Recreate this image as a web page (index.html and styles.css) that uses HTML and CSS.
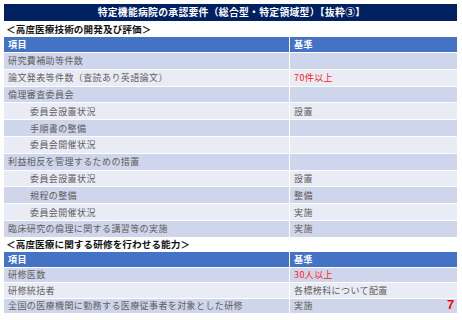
FILE: index.html
```html
<!DOCTYPE html>
<html lang="ja">
<head>
<meta charset="utf-8">
<link rel="stylesheet" href="styles.css">
</head>
<body>
<div class="slide">
  <div class="title">特定機能病院の承認要件（総合型・特定領域型）【抜粋③】</div>
  <div class="heading">＜高度医療技術の開発及び評価＞</div>
  <div class="table t1">
    <div class="row head"><div class="c1">項目</div><div class="c2">基準</div></div>
    <div class="row dark"><div class="c1">研究費補助等件数</div><div class="c2"></div></div>
    <div class="row light"><div class="c1">論文発表等件数（査読あり英語論文）</div><div class="c2 red">70件以上</div></div>
    <div class="row dark"><div class="c1">倫理審査委員会</div><div class="c2"></div></div>
    <div class="row light"><div class="c1 sub">委員会設置状況</div><div class="c2">設置</div></div>
    <div class="row dark"><div class="c1 sub">手順書の整備</div><div class="c2"></div></div>
    <div class="row light"><div class="c1 sub">委員会開催状況</div><div class="c2"></div></div>
    <div class="row dark"><div class="c1">利益相反を管理するための措置</div><div class="c2"></div></div>
    <div class="row light"><div class="c1 sub">委員会設置状況</div><div class="c2">設置</div></div>
    <div class="row dark"><div class="c1 sub">規程の整備</div><div class="c2">整備</div></div>
    <div class="row light"><div class="c1 sub">委員会開催状況</div><div class="c2">実施</div></div>
    <div class="row dark"><div class="c1">臨床研究の倫理に関する講習等の実施</div><div class="c2">実施</div></div>
  </div>
  <div class="heading h2">＜高度医療に関する研修を行わせる能力＞</div>
  <div class="table t2">
    <div class="row head"><div class="c1">項目</div><div class="c2">基準</div></div>
    <div class="row dark"><div class="c1">研修医数</div><div class="c2 red">30人以上</div></div>
    <div class="row light"><div class="c1">研修統括者</div><div class="c2">各標榜科について配置</div></div>
    <div class="row dark"><div class="c1">全国の医療機関に勤務する医療従事者を対象とした研修</div><div class="c2">実施</div></div>
  </div>
  <div class="pageno">7</div>
</div>
</body>
</html>
```

FILE: styles.css
```css
* { box-sizing: border-box; }
html, body { margin: 0; padding: 0; background: #fff; }
body {
  width: 462px;
  height: 320px;
  overflow: hidden;
  font-family: "Noto Sans CJK JP", "Noto Sans", sans-serif;
}
.slide {
  position: relative;
  padding: 4px 5px 0 4px;
}
.title {
  height: 17px;
  background: #002060;
  color: #fff;
  font-weight: bold;
  font-size: 9.8px;
  letter-spacing: 0.3px;
  line-height: 17px;
  text-align: center;
  padding-left: 2px;
}
.heading {
  height: 16px;
  font-size: 9.6px;
  letter-spacing: 0.1px;
  font-weight: bold;
  color: #111;
  line-height: 16px;
  padding-left: 2px;
}
.h2 { height: 15px; line-height: 15px; }
.table { display: flex; flex-direction: column; }
.row {
  display: grid;
  grid-template-columns: 285px 1fr;
  column-gap: 1px;
  border-top: 1px solid #fff;
  font-size: 9px;
  letter-spacing: 0.4px;
  color: #5e5e5e;
}
.t1 .row { height: 16.8px; }
.t1 .row.head, .t2 .row.head { height: 15px; border-top: 0; }
.t2 .row { height: 15.4px; }
.row > div {
  display: flex;
  align-items: center;
  padding-left: 4px;
  white-space: nowrap;
}
.row.head > div { background: #4472c4; color: #fff; font-weight: bold; }
.row.dark > div { background: #cfd5ea; }
.row.light > div { background: #e9ebf5; }
.row > .sub { padding-left: 26px; }
.red { color: #f22 !important; }
.pageno {
  position: absolute;
  left: 447px;
  top: 297px;
  color: #f00;
  font-family: "Liberation Sans", sans-serif;
  font-weight: bold;
  font-size: 13px;
  line-height: 16px;
}
```
